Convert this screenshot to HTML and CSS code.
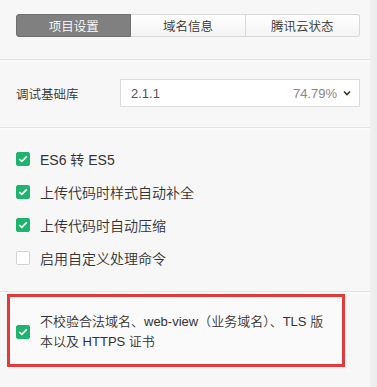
FILE: index.html
```html
<!DOCTYPE html>
<html>
<head>
<meta charset="utf-8">
<link rel="stylesheet" href="styles.css">
</head>
<body>
<div class="page">
  <div class="main">
    <div class="section tabs-section">
      <div class="tabs">
        <div class="tab active">项目设置</div>
        <div class="tab">域名信息</div>
        <div class="tab last">腾讯云状态</div>
      </div>
    </div>
    <div class="section lib-section">
      <div class="lib-row">
        <div class="lib-label">调试基础库</div>
        <div class="select">
          <span class="ver">2.1.1</span>
          <span class="pct">74.79%</span>
          <svg class="chev" width="8" height="6" viewBox="0 0 8 6"><path d="M1 1.5 L4 4.5 L7 1.5" fill="none" stroke="#333" stroke-width="1.6"/></svg>
        </div>
      </div>
    </div>
    <div class="section checks-section">
      <div class="check-row"><span class="cb on"><svg width="10" height="8" viewBox="0 0 10 8"><path d="M1.2 4 L3.8 6.4 L8.8 1.4" fill="none" stroke="#fff" stroke-width="1.6"/></svg></span><span class="lbl">ES6 转 ES5</span></div>
      <div class="check-row"><span class="cb on"><svg width="10" height="8" viewBox="0 0 10 8"><path d="M1.2 4 L3.8 6.4 L8.8 1.4" fill="none" stroke="#fff" stroke-width="1.6"/></svg></span><span class="lbl">上传代码时样式自动补全</span></div>
      <div class="check-row"><span class="cb on"><svg width="10" height="8" viewBox="0 0 10 8"><path d="M1.2 4 L3.8 6.4 L8.8 1.4" fill="none" stroke="#fff" stroke-width="1.6"/></svg></span><span class="lbl">上传代码时自动压缩</span></div>
      <div class="check-row"><span class="cb"></span><span class="lbl">启用自定义处理命令</span></div>
    </div>
    <div class="last-section">
      <div class="highlight">
        <span class="cb on"><svg width="10" height="8" viewBox="0 0 10 8"><path d="M1.2 4 L3.8 6.4 L8.8 1.4" fill="none" stroke="#fff" stroke-width="1.6"/></svg></span>
        <span class="lbl multi">不校验合法域名、web-view（业务域名）、TLS 版<br>本以及 HTTPS 证书</span>
      </div>
    </div>
  </div>
  <div class="track"></div>
</div>
</body>
</html>
```

FILE: styles.css
```css
html, body {
  margin: 0;
  padding: 0;
  background: #f7f7f7;
}
body {
  font-family: "Liberation Sans", "Noto Sans CJK SC", sans-serif;
  font-weight: 350;
  color: #333;
}
.page {
  display: flex;
  width: 377px;
  height: 387px;
  overflow: hidden;
}
.main {
  flex: 1;
}
.track {
  width: 7px;
  background: linear-gradient(to right, #f0f0f0, #ececec);
}
.section {
  border-bottom: 1px solid #e3e3e3;
  box-shadow: 0 2px 0 #fbfbfb;
}
.tabs-section {
  padding: 14px 0 22px 16px;
}
.tabs {
  display: flex;
  width: 344px;
  height: 23px;
}
.tab {
  flex: 1;
  display: flex;
  align-items: center;
  justify-content: center;
  font-size: 12.5px;
  color: #333;
  background: linear-gradient(#ffffff, #f4f4f4);
  border: 1px solid #d8d8d8;
  border-left: none;
  box-sizing: border-box;
}
.tab.active {
  background: #808080;
  border: 1px solid #6f6f6f;
  color: #fff;
  border-radius: 3px 0 0 3px;
}
.tab.last {
  border-radius: 0 3px 3px 0;
}
.lib-section {
  padding: 19px 0 20px 16px;
}
.lib-row {
  display: flex;
  align-items: center;
  height: 28px;
}
.lib-label {
  width: 104px;
  font-size: 12.5px;
  color: #333;
}
.select {
  width: 240px;
  height: 28px;
  box-sizing: border-box;
  background: #fff;
  border: 1px solid #dcdcdc;
  display: flex;
  align-items: center;
  padding: 0 8px 0 10px;
  font-size: 13px;
}
.ver {
  flex: 1;
  color: #555;
}
.pct {
  color: #888;
  margin-right: 6px;
}
.chev {
  display: block;
}
.checks-section {
  padding: 14px 0 17px 16px;
}
.check-row {
  display: flex;
  align-items: center;
  height: 33px;
}
.cb {
  width: 14px;
  height: 14px;
  box-sizing: border-box;
  border-radius: 2px;
  background: #fff;
  border: 1px solid #d2d2d2;
  display: flex;
  align-items: center;
  justify-content: center;
  flex-shrink: 0;
}
.cb.on {
  background: #1fb36f;
  border-color: #1fb36f;
}
.lbl {
  margin-left: 10px;
  font-size: 14px;
  color: #333;
}
.last-section {
  padding: 2px 0 0 7px;
}
.highlight {
  width: 338px;
  box-sizing: border-box;
  border: 3px solid #e33b3b;
  background: #fafafa;
  display: flex;
  align-items: center;
  padding: 15px 0 12px 6px;
}
.lbl.multi {
  font-size: 13px;
  line-height: 20px;
  white-space: nowrap;
}
```
